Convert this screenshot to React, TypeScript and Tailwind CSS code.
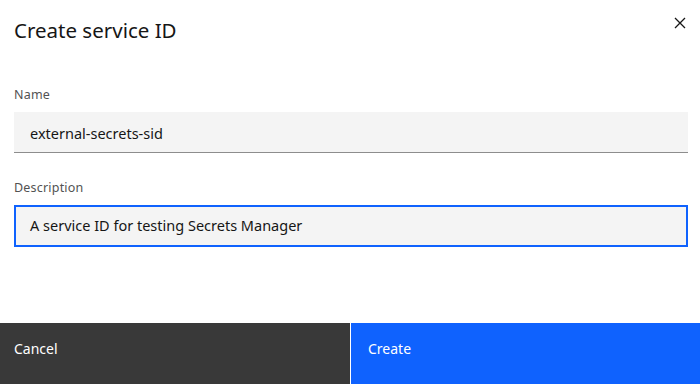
import React from "react";

function CloseIcon() {
  return (
    <svg width="16" height="16" viewBox="0 0 16 16" fill="none" stroke="#161616" strokeWidth="1.3">
      <path d="M3 3 L13 13 M13 3 L3 13" />
    </svg>
  );
}

export default function App() {
  return (
    <div
      className="w-[700px] h-[384px] bg-white flex flex-col text-[#161616]"
      style={{ fontFamily: '"Noto Sans", "Open Sans", sans-serif' }}
    >
      <div className="flex items-start justify-between pl-[14px] pr-[14px] pt-[16px] h-[87px]">
        <h1 className="text-[20.5px] leading-[28px] font-normal">Create service ID</h1>
        <button className="mt-[-1px] mr-[-2px]">
          <CloseIcon />
        </button>
      </div>

      <div className="px-[14px] pr-[12px] flex flex-col">
        <label className="text-[12.5px] leading-[16px] text-[#525252] tracking-[0.2px]">Name</label>
        <div className="mt-[9px] h-[41px] bg-[#f4f4f4] border-b border-[#8d8d8d] flex items-center px-[16px] pt-[3px] text-[14.5px]">
          external-secrets-sid
        </div>

        <label className="mt-[27px] text-[12.5px] leading-[16px] text-[#525252] tracking-[0.2px]">Description</label>
        <div className="mt-[9px] h-[42px] bg-[#f4f4f4] border-2 border-[#0f62fe] flex items-center px-[14px] text-[14.5px]">
          A service ID for testing Secrets Manager
        </div>
      </div>

      <div className="mt-auto h-[61px] flex gap-px">
        <button className="w-[350px] bg-[#393939] text-white text-left pl-[14px] pb-[10px] text-[14px] flex items-center">
          Cancel
        </button>
        <button className="flex-1 bg-[#0f62fe] text-white text-left pl-[17px] pb-[10px] text-[14px] flex items-center">
          Create
        </button>
      </div>
    </div>
  );
}
